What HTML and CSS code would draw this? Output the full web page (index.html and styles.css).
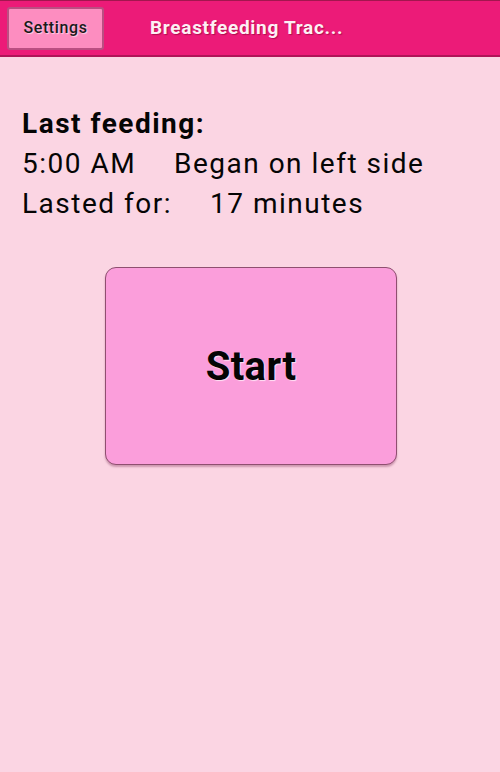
FILE: index.html
```html
<!DOCTYPE html>
<html>
<head>
<meta charset="utf-8">
<link rel="stylesheet" href="styles.css">
</head>
<body>
<div class="screen">
  <header class="bar">
    <button class="settings">Settings</button>
    <div class="title">Breastfeeding Trac...</div>
  </header>
  <main class="content">
    <div class="info">
      <div class="line bold">Last feeding:</div>
      <div class="line"><span class="time">5:00 AM</span>Began on left side</div>
      <div class="line"><span class="lasted">Lasted for:</span>17 minutes</div>
    </div>
    <div class="start-wrap">
      <button class="start">Start</button>
    </div>
  </main>
</div>
</body>
</html>
```
FILE: styles.css
```css
html, body {
  margin: 0;
  padding: 0;
}
body {
  width: 500px;
  height: 772px;
  background: #fbd5e3;
  font-family: Roboto, "Noto Sans", sans-serif;
  overflow: hidden;
}
.screen {
  display: flex;
  flex-direction: column;
  height: 772px;
}
.bar {
  height: 54px;
  background: #ec1b78;
  border-top: 1px solid #a3164f;
  border-bottom: 2px solid #b01458;
  display: flex;
  align-items: center;
  padding-left: 7px;
  box-sizing: content-box;
}
.settings {
  width: 97px;
  height: 43px;
  margin-top: 1px;
  background: #fd8dc0;
  border: 2px solid #bb4f82;
  border-radius: 3px;
  font-family: Roboto, sans-serif;
  font-size: 16px;
  font-weight: 500;
  letter-spacing: 0.6px;
  color: #1a1a1a;
  text-shadow: 1px 1px 1px rgba(255,255,255,0.6);
  padding: 0 0 3px 0;
}
.title {
  margin-left: 46px;
  margin-top: -1px;
  color: #fdf0f5;
  font-size: 19px;
  font-weight: 700;
  letter-spacing: 0.7px;
  text-shadow: 1px 1px 1px rgba(120,0,40,0.5);
}
.content {
  flex: 1;
  padding: 47px 0 0 22px;
}
.line {
  font-size: 28px;
  line-height: 40px;
  letter-spacing: 1.5px;
  color: #050505;
}
.bold {
  font-weight: 700;
}
.time {
  display: inline-block;
  width: 152px;
}
.lasted {
  display: inline-block;
  width: 188px;
}
.start-wrap {
  display: flex;
  padding: 43px 0 0 83px;
}
.start {
  width: 292px;
  height: 198px;
  background: #fb9edb;
  border: 1px solid #8f4f70;
  border-radius: 11px;
  box-shadow: 0 2px 2px rgba(120,40,80,0.35);
  font-family: Roboto, sans-serif;
  font-size: 40px;
  font-weight: 700;
  letter-spacing: 0.4px;
  color: #050505;
  text-shadow: 1px 1px 1px rgba(255,255,255,0.7);
  padding: 0;
}
```
